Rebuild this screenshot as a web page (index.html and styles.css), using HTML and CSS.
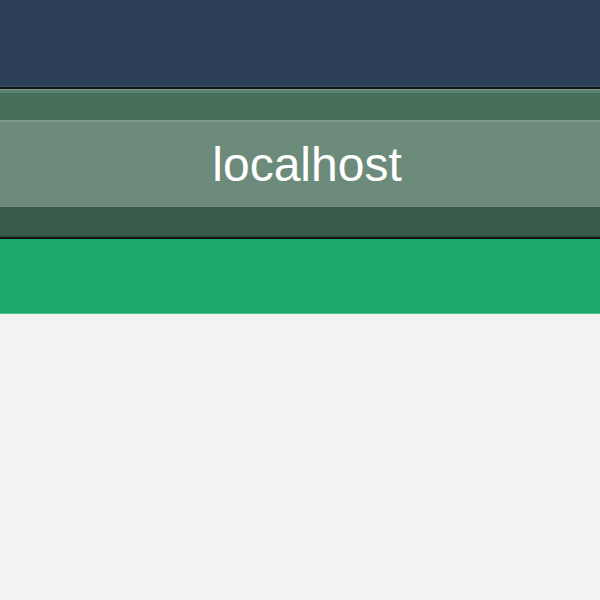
FILE: index.html
```html
<!DOCTYPE html>
<html>
<head>
<meta charset="utf-8">
<link rel="stylesheet" href="styles.css">
</head>
<body>
<div class="page">
  <div class="topbar"></div>
  <div class="chrome">
    <div class="chrome-top"></div>
    <div class="address"><span class="host">localhost</span></div>
    <div class="chrome-bottom"></div>
  </div>
  <div class="greenbar"></div>
  <div class="content"></div>
</div>
</body>
</html>
```
FILE: styles.css
```css
html, body {
  margin: 0;
  padding: 0;
  background: #f2f2f2;
}
.page {
  width: 600px;
  height: 600px;
  display: flex;
  flex-direction: column;
  overflow: hidden;
}
.topbar {
  height: 86px;
  background: #2c3f58;
  border-bottom: 1px solid #3d5068;
  flex: none;
}
.chrome {
  flex: none;
  border-top: 2px solid #0f1512;
  border-bottom: 2px solid #0f1512;
  display: flex;
  flex-direction: column;
}
.chrome-top {
  height: 30px;
  background: #476e58;
  border-top: 1px solid #7f9a8b;
  border-bottom: 2px solid #7b9888;
  box-shadow: inset 0 3px 0 #5f8270;
}
.address {
  height: 85px;
  background: #6d8b7a;
  display: flex;
  align-items: center;
  justify-content: center;
  padding-left: 14px;
}
.host {
  font-family: "Liberation Sans", Arial, sans-serif;
  font-size: 48px;
  color: #ffffff;
  line-height: 1;
}
.chrome-bottom {
  height: 28px;
  background: #3a5c4a;
  border-bottom: 2px solid #33503f;
}
.greenbar {
  flex: none;
  height: 74px;
  background: #1ba86d;
  border-bottom: 1px solid #4fc08f;
}
.content {
  flex: 1;
  background: #f2f2f2;
}
```
